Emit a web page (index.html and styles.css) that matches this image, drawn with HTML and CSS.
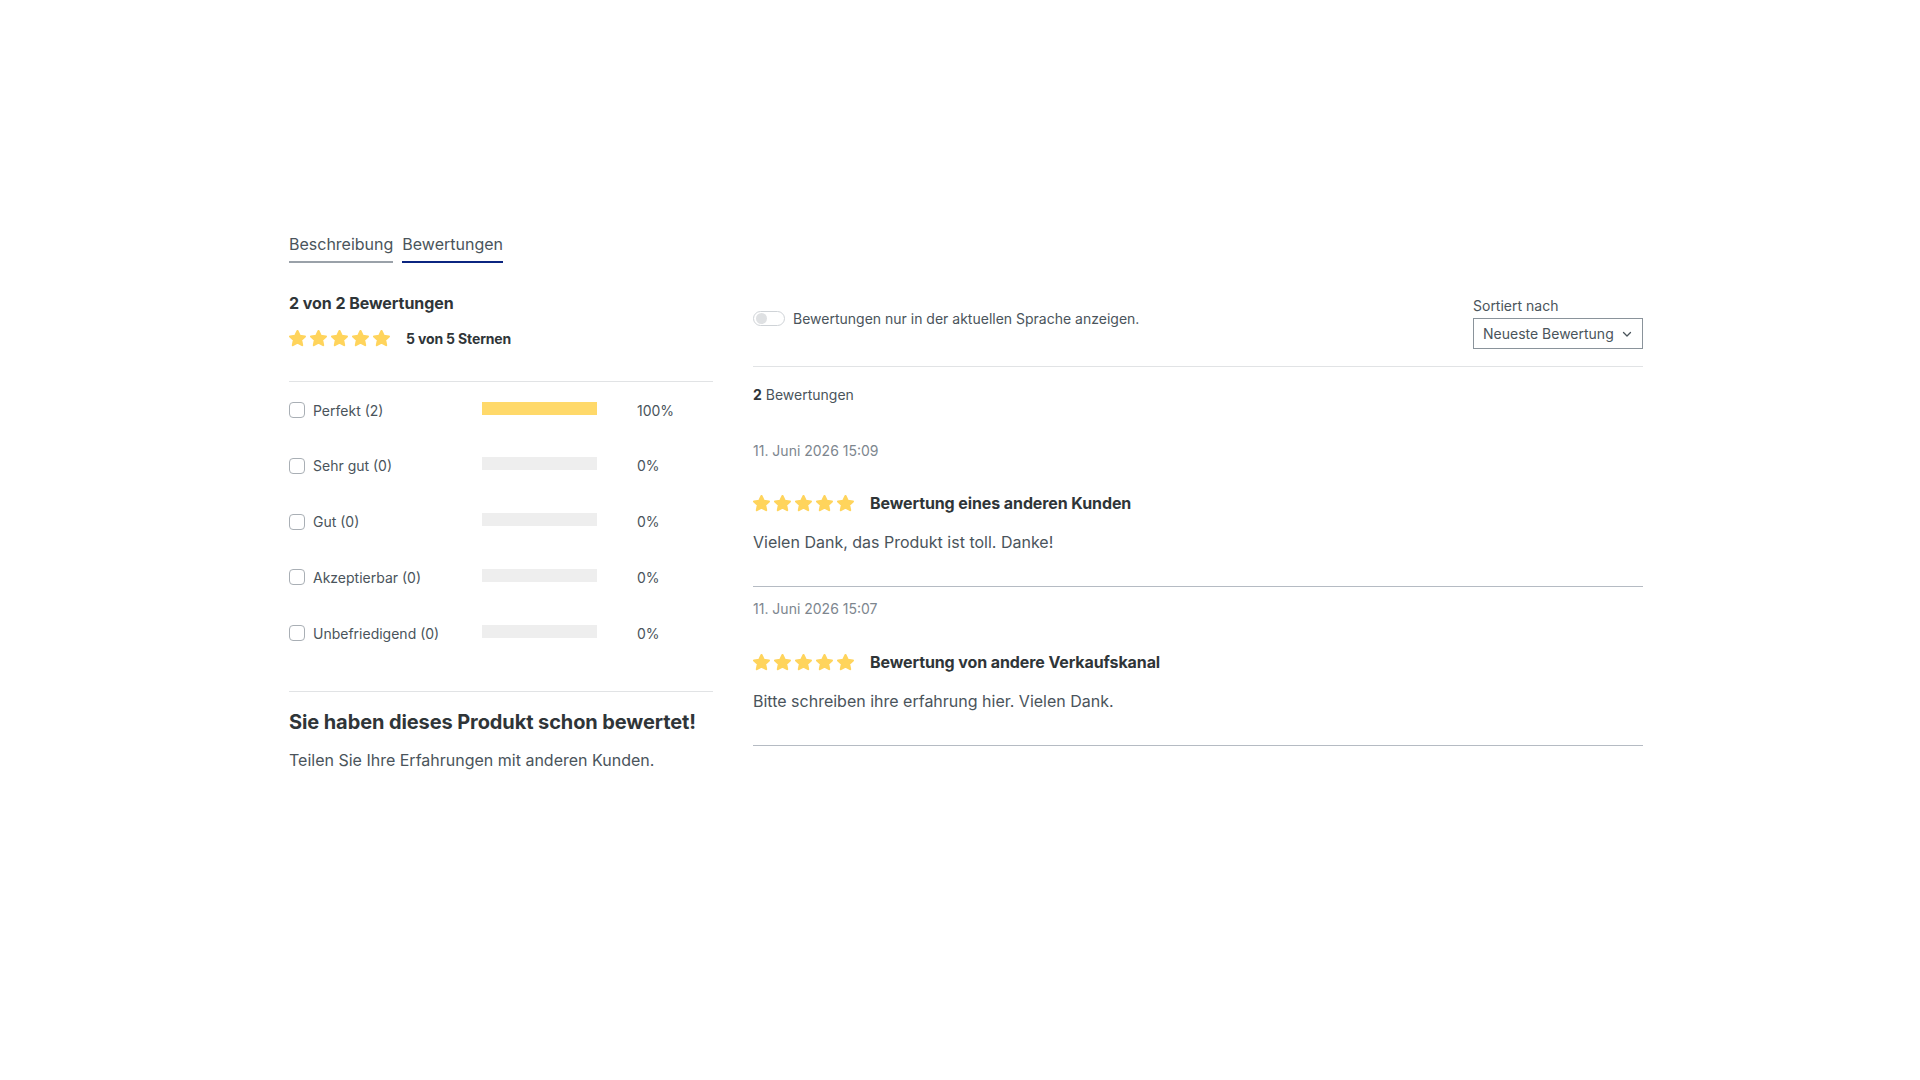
FILE: index.html
```html
<!DOCTYPE html>
<html lang="de">
<head>
<meta charset="utf-8">
<title>Bewertungen</title>
<link rel="stylesheet" href="styles.css">
</head>
<body>
<svg width="0" height="0" class="defs">
  <defs>
    <symbol id="star" viewBox="2.2 2.2 19.6 19.6">
      <path d="M12 3.4l2.6 5.5 6 .7-4.4 4.1 1.2 6-5.4-3-5.4 3 1.2-6-4.4-4.1 6-.7z" fill="#ffd45c" stroke="#ffd45c" stroke-width="2.4" stroke-linejoin="round"/>
    </symbol>
  </defs>
</svg>
<div class="container">
  <nav class="tabs">
    <a class="tab">Beschreibung</a>
    <a class="tab active">Bewertungen</a>
  </nav>
  <div class="content">
    <aside class="summary">
      <h3 class="summary-title">2 von 2 Bewertungen</h3>
      <div class="stars-row">
        <span class="stars">
          <svg class="star"><use href="#star"/></svg><svg class="star"><use href="#star"/></svg><svg class="star"><use href="#star"/></svg><svg class="star"><use href="#star"/></svg><svg class="star"><use href="#star"/></svg>
        </span>
        <span class="stars-label">5 von 5 Sternen</span>
      </div>
      <ul class="filters">
        <li class="filter"><span class="check"></span><span class="filter-label">Perfekt (2)</span><span class="bar"><span class="bar-fill" style="width:100%"></span></span><span class="pct">100%</span></li>
        <li class="filter"><span class="check"></span><span class="filter-label">Sehr gut (0)</span><span class="bar"><span class="bar-fill" style="width:0%"></span></span><span class="pct">0%</span></li>
        <li class="filter"><span class="check"></span><span class="filter-label">Gut (0)</span><span class="bar"><span class="bar-fill" style="width:0%"></span></span><span class="pct">0%</span></li>
        <li class="filter"><span class="check"></span><span class="filter-label">Akzeptierbar (0)</span><span class="bar"><span class="bar-fill" style="width:0%"></span></span><span class="pct">0%</span></li>
        <li class="filter"><span class="check"></span><span class="filter-label">Unbefriedigend (0)</span><span class="bar"><span class="bar-fill" style="width:0%"></span></span><span class="pct">0%</span></li>
      </ul>
      <div class="already">
        <h2 class="already-title">Sie haben dieses Produkt schon bewertet!</h2>
        <p class="already-text">Teilen Sie Ihre Erfahrungen mit anderen Kunden.</p>
      </div>
    </aside>
    <section class="reviews">
      <div class="toolbar">
        <label class="switch-row"><span class="switch"><span class="knob"></span></span><span>Bewertungen nur in der aktuellen Sprache anzeigen.</span></label>
        <div class="sort">
          <div class="sort-label">Sortiert nach</div>
          <div class="select">Neueste Bewertung
            <svg class="chev" viewBox="0 0 12 12"><path d="M2.5 4.5L6 8l3.5-3.5" fill="none" stroke="#4a545b" stroke-width="1.3" stroke-linecap="round" stroke-linejoin="round"/></svg>
          </div>
        </div>
      </div>
      <div class="count"><strong>2</strong> Bewertungen</div>
      <article class="review first">
        <div class="date">11. Juni 2026 15:09</div>
        <div class="review-head">
          <span class="stars"><svg class="star"><use href="#star"/></svg><svg class="star"><use href="#star"/></svg><svg class="star"><use href="#star"/></svg><svg class="star"><use href="#star"/></svg><svg class="star"><use href="#star"/></svg></span>
          <h4 class="review-title">Bewertung eines anderen Kunden</h4>
        </div>
        <p class="review-text">Vielen Dank, das Produkt ist toll. Danke!</p>
      </article>
      <article class="review">
        <div class="date">11. Juni 2026 15:07</div>
        <div class="review-head">
          <span class="stars"><svg class="star"><use href="#star"/></svg><svg class="star"><use href="#star"/></svg><svg class="star"><use href="#star"/></svg><svg class="star"><use href="#star"/></svg><svg class="star"><use href="#star"/></svg></span>
          <h4 class="review-title">Bewertung von andere Verkaufskanal</h4>
        </div>
        <p class="review-text">Bitte schreiben ihre erfahrung hier. Vielen Dank.</p>
      </article>
    </section>
  </div>
</div>
</body>
</html>
```

FILE: styles.css
```css
* { box-sizing: border-box; }
html, body { margin: 0; padding: 0; background: #fff; }
body {
  font-family: Inter, "Noto Sans", "Liberation Sans", sans-serif;
  color: #4a545b;
  font-size: 14px;
  line-height: 21px;
}
.defs { position: absolute; width: 0; height: 0; }
.container { width: 1354px; margin-left: 289px; padding-top: 232px; }

.tabs { display: flex; gap: 9px; }
.tab {
  font-size: 16px; line-height: 24px; color: #4a545b;
  padding-bottom: 5px; border-bottom: 2px solid #9aa1a9;
}
.tab.active { border-bottom-color: #0b2580; }

.content { display: grid; grid-template-columns: 424px 890px; column-gap: 40px; margin-top: 28px; }

.summary-title { margin: 0; font-size: 16px; line-height: 24px; font-weight: 700; color: #2f3538; letter-spacing: -0.05px; }
.stars-row { display: flex; align-items: center; height: 20px; margin-top: 13px; }
.stars { display: inline-flex; gap: 4px; }
.star { width: 17px; height: 17px; display: block; }
.stars-label { margin-left: 16px; font-weight: 700; color: #2f3538; font-size: 14px; letter-spacing: -0.15px; }

.filters { list-style: none; margin: 33px 0 0; padding: 16px 0 0; border-top: 1px solid #e1e3e5; }
.filter { display: flex; align-items: center; height: 24px; margin-bottom: 31.75px; }
.filter:last-child { margin-bottom: 0; }
.check { width: 16px; height: 16px; border: 1px solid #a9afb5; border-radius: 4px; flex: none; }
.filter-label { width: 177px; padding-left: 8px; }
.bar { width: 115px; height: 13px; background: #eeeeee; display: block; margin-top: -4px; }
.bar-fill { display: block; height: 100%; background: #ffd96a; }
.pct { margin-left: 40px; }

.already { margin-top: 46px; border-top: 1px solid #e1e3e5; padding-top: 15px; }
.already-title { margin: 0; font-size: 20px; line-height: 30px; font-weight: 700; color: #2f3538; letter-spacing: -0.1px; }
.already-text { margin: 11px 0 0; font-size: 16px; line-height: 24px; }

.toolbar { display: flex; justify-content: space-between; align-items: flex-start; padding: 4px 0 17px; border-bottom: 1px solid #e1e3e5; }
.switch-row { display: flex; align-items: center; gap: 8px; margin-top: 13px; }
.switch { width: 32px; height: 15px; border: 1px solid #cfd3d7; border-radius: 8px; display: flex; align-items: center; padding-left: 2px; }
.knob { width: 11px; height: 11px; border-radius: 50%; background: #dfe1e3; }
.sort { width: 170px; }
.sort-label { font-size: 14px; line-height: 21px; }
.select {
  margin-top: 2px; height: 31px; border: 1px solid #8a939b;
  display: flex; align-items: center; justify-content: space-between;
  padding: 0 9px 0 9px; font-size: 14px;
}
.chev { width: 12px; height: 12px; }

.count { margin-top: 17px; font-size: 14px; line-height: 21px; }
.count strong { font-weight: 700; color: #2f3538; }

.review { padding: 11px 0 32px; border-bottom: 1px solid #b5bbc3; }
.review.first { margin-top: 24px; }
.date { color: #7d868e; font-size: 14px; line-height: 21px; }
.review-head { display: flex; align-items: center; margin-top: 31px; }
.review.first .review-head { margin-top: 30px; }
.review-title { margin: 0 0 0 16px; font-size: 16px; line-height: 24px; font-weight: 700; color: #2f3538; letter-spacing: -0.1px; }
.review-text { margin: 15px 0 0; font-size: 16px; line-height: 24px; }
```
